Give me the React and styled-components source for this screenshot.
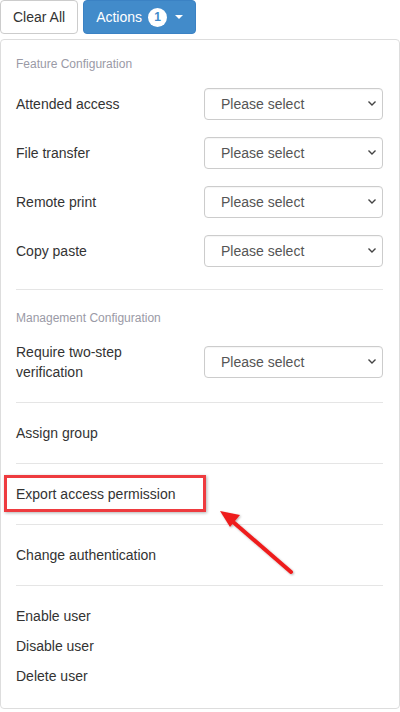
import React from 'react';
import styled, { createGlobalStyle } from 'styled-components';

const GlobalStyle = createGlobalStyle`
  html, body {
    margin: 0;
    padding: 0;
    background: #fff;
  }
  body {
    font-family: "Liberation Sans", Arial, sans-serif;
    font-size: 14px;
    color: #333;
  }
`;

const Page = styled.div`
  width: 400px;
  position: relative;
`;

const Toolbar = styled.div`
  display: flex;
  gap: 5px;
  height: 34px;
`;

const Button = styled.button`
  display: inline-flex;
  align-items: center;
  gap: 6px;
  height: 34px;
  padding: 0 12px;
  border-radius: 4px;
  font-family: inherit;
  font-size: 14px;
  cursor: pointer;
  border: 1px solid ${p => (p.$primary ? '#3b82c4' : '#ccc')};
  background: ${p => (p.$primary ? '#428bca' : '#fff')};
  color: ${p => (p.$primary ? '#fff' : '#333')};
`;

const Badge = styled.span`
  display: inline-flex;
  align-items: center;
  justify-content: center;
  width: 19px;
  height: 19px;
  border-radius: 50%;
  background: #fff;
  color: #428bca;
  font-size: 12px;
  font-weight: bold;
`;

const Caret = styled.span`
  width: 0;
  height: 0;
  border-left: 4px solid transparent;
  border-right: 4px solid transparent;
  border-top: 4px solid #fff;
  margin-left: 2px;
`;

const Panel = styled.div`
  margin-top: 5px;
  border: 1px solid #ddd;
  border-radius: 4px;
  padding: 0 16px 0 15px;
  min-height: 670px;
  box-sizing: border-box;
`;

const Section = styled.div`
  position: relative;
  padding: ${p => (p.$first ? '16px 0 22px' : '20px 0 20px')};
  border-top: ${p => (p.$first ? 'none' : '1px solid #e5e5e5')};
  display: flex;
  flex-direction: column;
  gap: ${p => p.$gap || 17}px;
`;

const SectionTitle = styled.div`
  font-size: 12px;
  line-height: 17px;
  color: #9a9aa6;
  margin-bottom: -2px;
`;

const Row = styled.div`
  display: flex;
  align-items: center;
  justify-content: space-between;
  min-height: 32px;
`;

const Label = styled.div`
  line-height: 20px;
  max-width: 150px;
`;

const SelectWrap = styled.div`
  position: relative;
  width: 179px;
  flex-shrink: 0;
`;

const Select = styled.select`
  appearance: none;
  width: 100%;
  height: 32px;
  border: 1px solid #ccc;
  border-radius: 4px;
  background: #fff;
  padding: 0 0 0 16px;
  font-family: inherit;
  font-size: 14px;
  color: #555;
  box-shadow: inset 0 1px 1px rgba(0, 0, 0, 0.04);
`;

const Chevron = styled.svg`
  position: absolute;
  right: 6px;
  top: 12px;
  pointer-events: none;
`;

const Item = styled.div`
  line-height: 20px;
`;

const Highlight = styled.div`
  position: absolute;
  left: -12px;
  top: 11px;
  width: 196px;
  height: 31px;
  border: 3px solid #ee3b3f;
  box-shadow: 1px 1px 3px rgba(0, 0, 0, 0.3);
  pointer-events: none;
`;

const Arrow = styled.svg`
  position: absolute;
  left: 214px;
  top: 466px;
  pointer-events: none;
`;

const featureRows = ['Attended access', 'File transfer', 'Remote print', 'Copy paste'];

function SelectField() {
  return (
    <SelectWrap>
      <Select defaultValue="">
        <option value="">Please select</option>
      </Select>
      <Chevron width="10" height="7" viewBox="0 0 10 7">
        <path d="M1.5 1.5 L5 5 L8.5 1.5" fill="none" stroke="#444" strokeWidth="1.4" />
      </Chevron>
    </SelectWrap>
  );
}

export default function App() {
  return (
    <Page>
      <GlobalStyle />
      <Toolbar>
        <Button>Clear All</Button>
        <Button $primary>
          Actions <Badge>1</Badge>
          <Caret />
        </Button>
      </Toolbar>

      <Panel>
        <Section $first>
          <SectionTitle>Feature Configuration</SectionTitle>
          {featureRows.map(label => (
            <Row key={label}>
              <Label>{label}</Label>
              <SelectField />
            </Row>
          ))}
        </Section>

        <Section>
          <SectionTitle>Management Configuration</SectionTitle>
          <Row>
            <Label>Require two-step verification</Label>
            <SelectField />
          </Row>
        </Section>

        <Section>
          <Item>Assign group</Item>
        </Section>

        <Section>
          <Item>Export access permission</Item>
          <Highlight />
        </Section>

        <Section>
          <Item>Change authentication</Item>
        </Section>

        <Section $gap={10}>
          <Item>Enable user</Item>
          <Item>Disable user</Item>
          <Item>Delete user</Item>
        </Section>
      </Panel>

      <Arrow width="90" height="120" viewBox="0 0 90 120">
        <defs>
          <filter id="sh" x="-20%" y="-20%" width="140%" height="140%">
            <feDropShadow dx="1" dy="1" stdDeviation="1" floodOpacity="0.3" />
          </filter>
        </defs>
        <g filter="url(#sh)">
          <line x1="77" y1="106" x2="18" y2="55" stroke="#ee1c1c" strokeWidth="4" strokeLinecap="round" />
          <polygon points="6,45 26,49 16,61" fill="#ee1c1c" />
        </g>
      </Arrow>
    </Page>
  );
}
